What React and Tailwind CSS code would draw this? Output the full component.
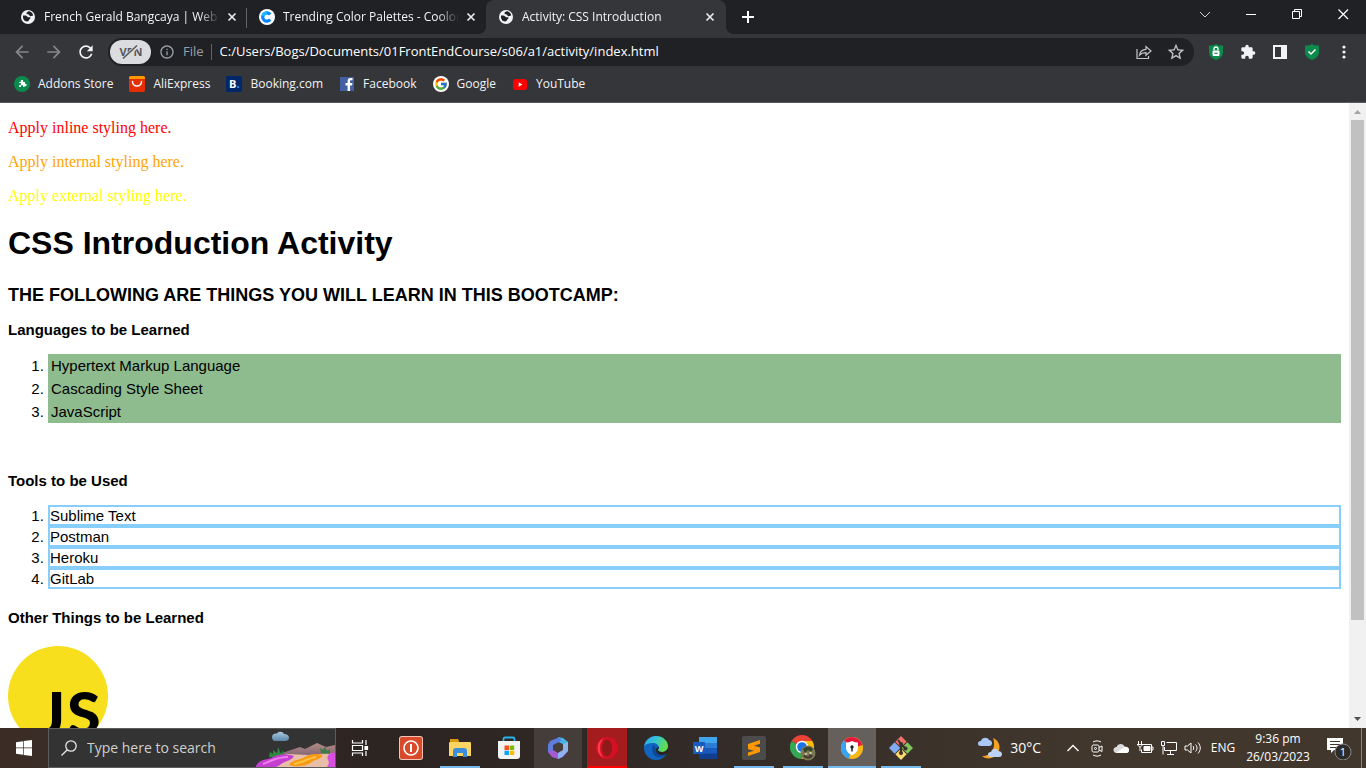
import React from "react";
import { FcGoogle } from "react-icons/fc";
import { MdExtension, MdStarBorder, MdOutlineInfo, MdRefresh, MdArrowBack, MdArrowForward } from "react-icons/md";

const globePath =
  "M12 2C6.480 2 2 6.480 2 12s4.480 10 10 10 10-4.480 10-10S17.520 2 12 2zM4 12c0-.6.1-1.200.200-1.800L8.500 14.500c.8.700 1.500.500 2.500.500v1c0 1.100.500 1.500 1 2v1.900C7.500 19.900 4 16.400 4 12zm14 5.400c-.3-.8-1-1.400-1.900-1.400h-1v-3c0-.6-.400-1-1-1H9v-2h1.500c.6 0 1-.4 1-1V7h2c1.100 0 2-.9 2-2v-.300c2.700 1.100 4.500 4 4.500 7.300 0 2-.8 4-2 5.400z";

function Globe() {
  return (
    <svg className="size-4 shrink-0" viewBox="0 0 16 16" aria-hidden="true">
      <circle cx="8" cy="8" r="7" fill="#f1f3f4" />
      <path d="M3 6.500h2.500c1.300 0 1.500 1.500 2.700 1.700 1 .2 2.300-.200 2.300.9 0 1-1.300 1-1.500 2-.1.700-.8 1.300-1.900 1.300-2.900 0-4.500-2.500-4.100-5.900z" fill="#202124" />
      <path d="M8.500 2.300c-.8.900-2.200.800-2 2.100.2 1.200 2.200.500 2.700 1.500.4.900 1 1.500 2.200 1.200l1.800-.6C12.800 4 10.800 2.300 8.500 2.300z" fill="#202124" />
    </svg>
  );
}

function CoolorsIcon() {
  return (
    <svg className="size-4 shrink-0" viewBox="0 0 16 16" aria-hidden="true">
      <circle cx="8" cy="8" r="8" fill="#fff" />
      <path d="M11.200 10.600A4.200 4.200 0 1 1 11.200 5.400" fill="none" stroke="#0a84ff" strokeWidth="3.200" />
      <path d="M4 7A4.200 4.200 0 0 1 8 3.800" fill="none" stroke="#1fb6ff" strokeWidth="3.200" />
    </svg>
  );
}

function Cross() {
  return (
    <svg className="size-4" viewBox="0 0 16 16" aria-hidden="true">
      <path d="M4.500 4.500l7 7M11.500 4.500l-7 7" stroke="#e8eaed" strokeWidth="1.700" />
    </svg>
  );
}

function Tab({ icon, title, active, separator }) {
  return (
    <div
      role="tab"
      aria-selected={!!active}
      className={
        active
          ? "relative flex h-[34px] w-[240px] items-center gap-2 rounded-t-lg bg-[#35363a] pl-3 pr-2"
          : "relative flex h-[34px] w-[239px] items-center gap-2 pl-3 pr-[7px]"
      }
    >
      {active && (
        <>
          <span className="absolute -left-2 bottom-0 size-2 bg-[radial-gradient(circle_at_top_left,#202124_8px,#35363a_8px)]" />
          <span className="absolute -right-2 bottom-0 size-2 bg-[radial-gradient(circle_at_top_right,#202124_8px,#35363a_8px)]" />
        </>
      )}
      {icon}
      <span className="min-w-0 flex-1 overflow-hidden whitespace-nowrap [mask-image:linear-gradient(to_right,black_88%,transparent)]">
        {title}
      </span>
      <button aria-label={"Close " + title} className="-ml-1">
        <Cross />
      </button>
      {separator && <span className="absolute right-0 top-2 h-5 w-px bg-[#5f6368]" />}
    </div>
  );
}

function WindowButton({ label, children }) {
  return (
    <button aria-label={label} className="flex h-7 w-[46px] items-center justify-center">
      <svg className="size-3" viewBox="0 0 12 12" fill="none" stroke="#fff" aria-hidden="true">
        {children}
      </svg>
    </button>
  );
}

function TabStrip() {
  return (
    <header className="flex h-[34px] shrink-0 justify-between bg-[#202124] pl-2">
      <div role="tablist" className="flex">
        <Tab icon={<Globe />} title="French Gerald Bangcaya | Web Developer" separator />
        <Tab icon={<CoolorsIcon />} title="Trending Color Palettes - Coolors" />
        <Tab icon={<Globe />} title="Activity: CSS Introduction" active />
        <button aria-label="New tab" className="ml-3 flex w-5 items-center justify-center">
          <svg className="size-3" viewBox="0 0 12 12" aria-hidden="true">
            <path d="M6 0v12M0 6h12" stroke="#fff" strokeWidth="2" />
          </svg>
        </button>
      </div>
      <div className="flex">
        <WindowButton label="Search tabs">
          <path d="M1 4l5 5 5-5" stroke="#d0d1d3" />
        </WindowButton>
        <WindowButton label="Minimize">
          <path d="M1 6.500h10" />
        </WindowButton>
        <WindowButton label="Restore">
          <path d="M1.500 3.500h7v7h-7zM3.500 3.500v-2h7v7h-2" />
        </WindowButton>
        <WindowButton label="Close">
          <path d="M1.500 1.500l9.500 9.500M11 1.500l-9.500 9.500" strokeWidth="1.200" />
        </WindowButton>
      </div>
    </header>
  );
}

function Shield({ children }) {
  return (
    <svg className="size-4" viewBox="0 0 16 16" aria-hidden="true">
      <path d="M8 0c2 1.200 4.500 1.700 7 1.500V8.500c0 3.500-3 6-7 7.500-4-1.500-7-4-7-7.500V1.500C3.500 1.700 6 1.200 8 0z" fill="#0b8a4b" />
      {children}
    </svg>
  );
}

function Toolbar() {
  return (
    <div className="flex h-9 shrink-0 items-center bg-[#35363a] pl-3 pr-3 pt-0">
      <div className="flex gap-3">
        <button aria-label="Back" className="size-5 text-[#85878b]"><MdArrowBack className="size-5" /></button>
        <button aria-label="Forward" className="size-5 text-[#85878b]"><MdArrowForward className="size-5" /></button>
        <button aria-label="Reload" className="size-5 text-[#f1f3f4]"><MdRefresh className="size-5" /></button>
      </div>
      <div className="ml-3 flex h-7 min-w-0 flex-1 items-center rounded-full bg-[#202124] pl-[2px] pr-2">
        <button aria-label="VPN off" className="flex h-6 w-[41px] items-center justify-center rounded-full bg-[#dadce0]">
          <svg className="h-4 w-7" viewBox="0 0 28 16" aria-hidden="true">
            <text x="14" y="12" textAnchor="middle" fontSize="11" fontWeight="700" fontFamily="Open Sans" fill="#55585c">VPN</text>
            <path d="M7 15L21 1" stroke="#dadce0" strokeWidth="4" />
            <path d="M6 14.500L20 1.500" stroke="#55585c" strokeWidth="1.600" />
          </svg>
        </button>
        <MdOutlineInfo className="ml-2 size-4 shrink-0 text-[#9aa0a6]" />
        <span className="ml-2 text-[13px] text-[#9aa0a6]">File</span>
        <span className="ml-[7px] h-4 w-px bg-[#5f6368]" />
        <input
          aria-label="Address"
          className="ml-2 min-w-0 flex-1 bg-transparent text-[13px] text-white outline-none"
          defaultValue="C:/Users/Bogs/Documents/01FrontEndCourse/s06/a1/activity/index.html"
        />
        <button aria-label="Share" className="mr-3 size-5">
          <svg className="size-5" viewBox="0 0 20 20" fill="none" stroke="#c3c5c8" strokeWidth="1.200" aria-hidden="true">
            <path d="M3 7v9.500h11.500V14" />
            <path d="M5.500 13c.5-3.500 3-5.500 6.500-5.700V4.500l5 4.500-5 4.300v-2.700c-3-.1-5 .7-6.500 2.400z" />
          </svg>
        </button>
        <button aria-label="Bookmark this page" className="text-[#c3c5c8]"><MdStarBorder className="size-5" /></button>
      </div>
      <div className="ml-[14px] flex items-center gap-4 pr-[2px]">
        <button aria-label="VPN extension">
          <Shield>
            <rect x="4.500" y="6.500" width="7" height="5.500" rx="1" fill="#fff" />
            <path d="M6 6.500V5a2 2 0 0 1 4 0v1.500" fill="none" stroke="#fff" strokeWidth="1.300" />
            <path d="M6.500 9.300h3" stroke="#0b8a4b" strokeWidth="1.200" />
          </Shield>
        </button>
        <button aria-label="Extensions" className="text-[#f1f3f4]"><MdExtension className="size-4" /></button>
        <button aria-label="Side panel">
          <svg className="size-4" viewBox="0 0 16 16" aria-hidden="true">
            <path fillRule="evenodd" d="M1 1h14v14H1zM3 3v10h6V3z" fill="#f1f3f4" />
          </svg>
        </button>
        <button aria-label="Security">
          <Shield>
            <path d="M4.500 7.500l2.500 2.500 4.500-4.500" fill="none" stroke="#fff" strokeWidth="1.500" />
          </Shield>
        </button>
        <button aria-label="Menu">
          <svg className="size-4" viewBox="0 0 16 16" fill="#f1f3f4" aria-hidden="true">
            <circle cx="8" cy="3" r="1.600" /><circle cx="8" cy="8" r="1.600" /><circle cx="8" cy="13" r="1.600" />
          </svg>
        </button>
      </div>
    </div>
  );
}

function BookmarkIcon({ children }) {
  return <svg className="size-4 shrink-0" viewBox="0 0 16 16" aria-hidden="true">{children}</svg>;
}

const bookmarks = [
  {
    name: "Addons Store",
    icon: (
      <BookmarkIcon>
        <circle cx="8" cy="8" r="8" fill="#0b8a4b" />
        <path d="M5 6h2a1.300 1.300 0 1 1 2 0h2v1.700a1.300 1.300 0 1 1-.5 2.300V11H9a1.200 1.200 0 1 0-2 0H5V9a1.200 1.200 0 1 0 0-1.800z" fill="#fff" />
      </BookmarkIcon>
    ),
  },
  {
    name: "AliExpress",
    icon: (
      <BookmarkIcon>
        <rect width="16" height="16" rx="2" fill="#e62e04" />
        <path d="M2 0h12a2 2 0 0 1 2 2v1H0V2a2 2 0 0 1 2-2z" fill="#ff9900" />
        <path d="M3.500 5.500a4.500 4.500 0 0 0 9 0" fill="none" stroke="#fff" strokeWidth="1.500" strokeLinecap="round" />
      </BookmarkIcon>
    ),
  },
  {
    name: "Booking.com",
    icon: (
      <BookmarkIcon>
        <rect width="16" height="16" rx="2" fill="#00266b" />
        <text x="3" y="12" fontSize="11" fontWeight="700" fontFamily="Open Sans" fill="#fff">B</text>
        <circle cx="12" cy="11" r="1.100" fill="#1a9cf0" />
      </BookmarkIcon>
    ),
  },
  {
    name: "Facebook",
    icon: (
      <BookmarkIcon>
        <rect x="1" y="1" width="14" height="14" fill="#4460a0" />
        <path d="M13.500 4.200h-1.300c-1 0-1.200.500-1.200 1.200V7h2.400l-.3 2.400H11V15H8.600V9.400H6.500V7h2.100V5.200C8.600 3 9.900 2 11.700 2l1.800.1z" fill="#fff" />
      </BookmarkIcon>
    ),
  },
  {
    name: "Google",
    icon: (
      <span className="flex size-4 shrink-0 items-center justify-center rounded-full bg-white">
        <FcGoogle className="size-[14px]" />
      </span>
    ),
  },
  {
    name: "YouTube",
    icon: (
      <BookmarkIcon>
        <rect x="1" y="3" width="14" height="11" rx="2.500" fill="#f00" />
        <path d="M6.700 6.300v4.400L10.300 8.500z" fill="#fff" />
      </BookmarkIcon>
    ),
  },
];

function BookmarksBar() {
  return (
    <nav className="flex h-8 shrink-0 items-center gap-4 bg-[#35363a] pb-1 pl-[14px]">
      {bookmarks.map((b) => (
        <a key={b.name} href="#" className="flex items-center gap-2">
          {b.icon}
          {b.name}
        </a>
      ))}
    </nav>
  );
}

function Page() {
  return (
    <main className="min-w-0 flex-1 overflow-hidden px-2 pt-4 font-['Liberation_Sans',Arial,sans-serif] text-[15px] leading-[17px]">
      <div className="flex flex-col gap-4 font-['Liberation_Serif',serif] text-base leading-[18px]">
        <p className="text-[red]">Apply inline styling here.</p>
        <p className="text-[orange]">Apply internal styling here.</p>
        <p className="text-[yellow]">Apply external styling here.</p>
      </div>
      <h1 className="mt-5 text-[32px] font-bold leading-9">CSS Introduction Activity</h1>
      <h3 className="mt-6 text-lg font-bold uppercase leading-5">The following are things you will learn in this bootcamp:</h3>
      <h4 className="mt-4 font-bold">Languages to be Learned</h4>
      <ol className="mt-4 list-decimal pl-10">
        {["Hypertext Markup Language", "Cascading Style Sheet", "JavaScript"].map((item) => (
          <li key={item} className="bg-[#8fbc8f] p-[3px]">{item}</li>
        ))}
      </ol>
      <h4 className="mt-[49px] font-bold">Tools to be Used</h4>
      <ol className="mt-4 list-decimal pl-10">
        {["Sublime Text", "Postman", "Heroku", "GitLab"].map((item) => (
          <li key={item} className="border-2 border-[#87cefa]">{item}</li>
        ))}
      </ol>
      <h4 className="mt-5 font-bold">Other Things to be Learned</h4>
      <svg className="mt-5 size-[100px]" viewBox="0 0 100 100" role="img" aria-label="JavaScript">
        <defs>
          <clipPath id="disc"><circle cx="50" cy="50" r="50" /></clipPath>
        </defs>
        <g clipPath="url(#disc)">
          <rect width="100" height="100" fill="#f7df1e" />
          <text x="31" y="90" fontSize="61" fontWeight="900" fontFamily="Lato">J</text>
          <text x="59" y="90" fontSize="61" fontWeight="900" fontFamily="Lato">S</text>
        </g>
      </svg>
    </main>
  );
}

function ScrollBar() {
  return (
    <div className="flex w-[17px] shrink-0 flex-col items-center bg-[#f1f1f1]" aria-hidden="true">
      <svg className="size-[17px] shrink-0" viewBox="0 0 17 17"><path d="M5 11h7L8.500 7z" fill="#a3a3a3" /></svg>
      <div className="w-[13px] basis-4/5 bg-[#c1c1c1]" />
      <div className="flex-1" />
      <svg className="size-[17px] shrink-0" viewBox="0 0 17 17"><path d="M5 6h7l-3.500 4z" fill="#505050" /></svg>
    </div>
  );
}

function SearchArt() {
  return (
    <svg className="h-[38px] w-20 shrink-0" viewBox="0 0 80 38" aria-hidden="true">
      <defs>
        <linearGradient id="hill" x1="0" y1="0" x2="0" y2="1">
          <stop offset="0" stopColor="#b58a80" /><stop offset="1" stopColor="#6d5876" />
        </linearGradient>
        <linearGradient id="cloud" x1="0" y1="0" x2="0" y2="1">
          <stop offset="0" stopColor="#a9cbe0" /><stop offset="1" stopColor="#5b87a8" />
        </linearGradient>
      </defs>
      <path d="M17 8c0-3 3-4 5-3.500C23 2 28 2 29 5c3 0 5 1.500 5 4 0 2-2 3-4 3H20c-2 0-3-2-3-4z" fill="url(#cloud)" />
      <path d="M24 25L45 18l5 2 12-6 9 4 9-2v16H24z" fill="url(#hill)" />
      <path d="M2 38c8-5 17-11 31-13l20 1 27-2v14z" fill="#e6bfa6" />
      <path d="M14 28l1-5 3 2 0-4 4 3 1-6 3 7 2-4 1 8z" fill="#2c8a3c" />
      <path d="M66 24l-1-5 3 2 2-3 2 4 3-2v5z" fill="#3c7d45" />
      <path d="M1 37c4-8 11-5 17-9 7-4 14-3 21-1-3 5-9 5-13 8-4 4-8 3-12 3H1z" fill="#c43fd0" />
      <path d="M8 35c7-2 12-7 25-7" stroke="#ef7df0" strokeWidth="2" fill="none" />
      <path d="M34 36c3-5 9-5 14-7 6-4 13-5 20-3-3 5-7 4-11 7-7 5-17 5-23 3z" fill="#f59a12" />
      <path d="M39 35c8-1 14-6 22-7" stroke="#ffc145" strokeWidth="2" fill="none" />
      <path d="M80 24c-5-1-9 3-7 7 2 3 0 5-1 7h8z" fill="#d84fe0" />
    </svg>
  );
}

function AppIcon({ children }) {
  return <svg className="size-6" viewBox="0 0 24 24" aria-hidden="true">{children}</svg>;
}

const apps = [
  {
    name: "Power",
    icon: (
      <AppIcon>
        <rect width="24" height="24" rx="3" fill="#f3c3b5" />
        <rect x="1" y="1" width="22" height="22" rx="2" fill="#d94a2b" />
        <circle cx="12" cy="12" r="7" fill="none" stroke="#fff" strokeWidth="1.600" />
        <path d="M12 8v8" stroke="#fff" strokeWidth="2" />
      </AppIcon>
    ),
  },
  {
    name: "File Explorer",
    running: true,
    icon: (
      <AppIcon>
        <path d="M2 3h8l1 2v4H2z" fill="#d99a10" />
        <path d="M2 6h20a1 1 0 0 1 1 1v13H1V7a1 1 0 0 1 1-1z" fill="#fcd462" />
        <path d="M5 21v-6a3 3 0 0 1 3-3h8a3 3 0 0 1 3 3v6h-4v-4H9v4z" fill="#3a8edb" />
      </AppIcon>
    ),
  },
  {
    name: "Microsoft Store",
    icon: (
      <AppIcon>
        <path d="M6.500 6V3a1.500 1.500 0 0 1 1.500-1.500h8A1.500 1.500 0 0 1 17.500 3v3" fill="none" stroke="#2bb4ea" strokeWidth="1.800" />
        <path d="M1 5h22v15a3 3 0 0 1-3 3H4a3 3 0 0 1-3-3z" fill="#f3f3f3" />
        <path d="M7.500 9.500H12v4.500H7.500z" fill="#f25022" /><path d="M12.700 9.500h4.500v4.500h-4.500z" fill="#7fba00" />
        <path d="M7.500 14.700H12v4.300H7.500z" fill="#00a4ef" /><path d="M12.700 14.700h4.500v4.300h-4.500z" fill="#ffb900" />
      </AppIcon>
    ),
  },
  {
    name: "Microsoft 365",
    tile: "bg-[#453d3a]",
    icon: (
      <AppIcon>
        <path d="M12 1l5 1 5 4v9l-5-3V8l-5-2z" fill="#45b5e8" />
        <path d="M14 1L4 5 2 9v7l5 3V9l8-4z" fill="#5d7de0" />
        <path d="M2 16l5-2 5 3 6-3 4 1-5 6-5 2-6-2z" fill="#a25bd0" />
        <path d="M22 6v9l-6 6-4 2V17l5-3V8z" fill="#8eb4f0" />
      </AppIcon>
    ),
  },
  {
    name: "Opera",
    opera: true,
    icon: (
      <AppIcon>
        <ellipse cx="12" cy="12" rx="11" ry="11" fill="#d41024" />
        <path d="M9 2a11 11 0 0 0 0 20C6 19 5 16 5 12s1-7 4-10z" fill="#ff3b4d" />
        <ellipse cx="12" cy="12" rx="5" ry="8.500" fill="#8e1a1c" />
      </AppIcon>
    ),
  },
  {
    name: "Microsoft Edge",
    icon: (
      <AppIcon>
        <defs>
          <linearGradient id="edgeTop" x1="0" y1="0" x2="1" y2="0.400">
            <stop offset="0" stopColor="#2b9fe6" /><stop offset="0.500" stopColor="#36c5d6" /><stop offset="1" stopColor="#60dc4d" />
          </linearGradient>
        </defs>
        <circle cx="12" cy="12" r="12" fill="#0f65c0" />
        <path d="M0 11C1 4 6 0 12 0c7 0 12 5 12 10 0 4-3 6-6 6-2 0-4-1-4-2 0-.6 1-1 1-2.500C15 9 12 7 9 7 5 7 1 8 0 11z" fill="url(#edgeTop)" />
        <path d="M10 9c-3 1-3 9 3 12 3 1 6 0 9-2l2-6-4 4c-5 2-8 0-8-3 0-2-1-4-2-5z" fill="#0c4a9c" />
        <path d="M15 11c0 1-1 2-1 3s2 2 4 2c3 0 5-2 6-4v5l-2 1c-4 2-10 1-10-4 0-1 .5-3 3-3z" fill="#2c2422" />
      </AppIcon>
    ),
  },
  {
    name: "Word",
    icon: (
      <AppIcon>
        <rect x="6" y="1" width="18" height="22" rx="1" fill="#2b7cd3" />
        <path d="M6 1h18v6H6z" fill="#41a5ee" /><path d="M6 12h18v6H6z" fill="#185abd" /><path d="M6 17.500h18V23H6z" fill="#103f91" />
        <rect x="0" y="6" width="12" height="12" rx="1" fill="#185abd" />
        <text x="6" y="15.500" textAnchor="middle" fontSize="9" fontWeight="700" fontFamily="Open Sans" fill="#fff">W</text>
      </AppIcon>
    ),
  },
  {
    name: "Sublime Text",
    running: true,
    icon: (
      <AppIcon>
        <rect width="24" height="24" rx="2" fill="#4b4b4b" />
        <path d="M18 4L6 8v5l6 1.700L6 16.500V20l12-4v-4.500l-6-1.700 6-2z" fill="#ff9800" />
      </AppIcon>
    ),
  },
  {
    name: "Google Chrome",
    running: true,
    icon: (
      <svg className="size-[26px]" viewBox="0 0 26 26" aria-hidden="true">
        <path d="M12 12L1.600 6a12 12 0 0 1 20.800 0z" fill="#ea4335" />
        <path d="M12 12L1.600 6A12 12 0 0 0 12 24z" fill="#34a853" />
        <path d="M12 12L12 24A12 12 0 0 0 22.400 6H12z" fill="#fbbc04" />
        <circle cx="12" cy="12" r="6.200" fill="#fff" /><circle cx="12" cy="12" r="4.800" fill="#1a73e8" />
        <circle cx="18" cy="18" r="7.500" fill="#7b7a55" />
        <path d="M13 14c3-3 7-3 10 0l-2 3-3-2-3 3z" fill="#36452c" /><path d="M13 21l3-2 2 3 2-4 3 3c-2 3-7 4-10 0z" fill="#4a3d32" />
        <circle cx="16" cy="19" r="1.300" fill="#d9b49a" /><circle cx="20.500" cy="18" r="1.200" fill="#c9d6a4" />
      </svg>
    ),
  },
  {
    name: "Secure Browser",
    running: true,
    tile: "bg-[#66605c]",
    icon: (
      <AppIcon>
        <circle cx="12" cy="12" r="11" fill="#f7b718" />
        <path d="M12 12L4 4.500A11 11 0 0 1 22.500 9z" fill="#e5173f" />
        <path d="M12 12L4 4.500A11 11 0 0 0 9 22.500z" fill="#36a3f7" />
        <path d="M12 5c2 1 4 1.500 6 1.500V12c0 3-3 6-6 7.500-3-1.500-6-4.500-6-7.500V6.500C8 6.500 10 6 12 5z" fill="#fff" />
        <circle cx="12" cy="11" r="1.700" fill="#222" /><path d="M12 11v4.500" stroke="#222" strokeWidth="1.500" />
      </AppIcon>
    ),
  },
  {
    name: "Git Bash",
    running: true,
    icon: (
      <AppIcon>
        <g transform="rotate(45 12 12)">
          <rect x="3.500" y="3.500" width="8" height="8" fill="#f0706c" /><rect x="12.500" y="3.500" width="8" height="8" fill="#80c45c" />
          <rect x="3.500" y="12.500" width="8" height="8" fill="#82acf2" /><rect x="12.500" y="12.500" width="8" height="8" fill="#fbd96b" />
        </g>
        <path d="M9 4l3 4v9M12 8l5 5" stroke="#3a2f2a" strokeWidth="2" fill="none" />
        <circle cx="12" cy="8" r="2" fill="#3a2f2a" /><circle cx="12" cy="17" r="2" fill="#3a2f2a" /><circle cx="16.500" cy="12.500" r="2" fill="#3a2f2a" />
      </AppIcon>
    ),
  },
];

function AppButton({ app }) {
  return (
    <button aria-label={app.name} className={"relative flex h-10 w-12 items-center justify-center " + (app.tile || "")}>
      {app.opera && <span className="absolute inset-x-1 inset-y-0 border-b-2 border-[red] bg-[#a51c1e]" />}
      <span className="relative">{app.icon}</span>
      {app.running && (
        <span className={app.tile ? "absolute inset-x-0 bottom-0 h-[2px] bg-[#76b9ed]" : "absolute inset-x-1 bottom-0 h-[2px] bg-[#76b9ed]"} />
      )}
    </button>
  );
}

function TrayIcon({ label, children }) {
  return (
    <button aria-label={label} className="flex h-10 w-6 items-center justify-center">
      <svg className="size-[18px]" viewBox="0 0 18 18" fill="none" stroke="#fff" aria-hidden="true">{children}</svg>
    </button>
  );
}

function Tray() {
  return (
    <div className="ml-auto flex items-center text-xs text-white">
      <button className="flex items-center gap-2 text-sm">
        <svg className="h-6 w-[25px]" viewBox="0 0 25 24" aria-hidden="true">
          <path d="M16 2c8 3 9 14 1 19-4 2-9 2-12-1 5 0 8-2 10-5s3-8 1-13z" fill="#f7a223" />
          <path d="M1 8c0-3 2-3 3-3 1-4 7-4 8-1 2 0 3 2 3 3 0 2-1 3-3 3H4C2 10 1 9 1 8z" fill="#a9c8f5" />
          <path d="M11 19c0-3 2-3 3-3 1-4 7-4 7-1 2 0 4 1 4 3s-1 3-3 3h-8c-2 0-3-1-3-2z" fill="#bcd3f7" />
        </svg>
        30°C
      </button>
      <button aria-label="Show hidden icons" className="ml-5 flex h-10 w-6 items-center justify-center">
        <svg className="h-2 w-3" viewBox="0 0 12 8" fill="none" stroke="#fff" strokeWidth="1.300" aria-hidden="true"><path d="M.5 7L6 1.500 11.500 7" /></svg>
      </button>
      <TrayIcon label="Meet Now">
        <rect x="4" y="6" width="7" height="7" rx="1.500" /><path d="M11 8.500l3-1.500v5.500l-3-1.500M5 3c3-1.500 5-1.500 8 0M5 16c3 1.500 5 1.500 8 0" /><circle cx="7.500" cy="9.500" r="1" />
      </TrayIcon>
      <TrayIcon label="OneDrive">
        <path d="M1.500 11c0-2.500 2-3.200 3.200-3C5.500 4.500 11 3.500 12.500 7.500c3 0 4.500 1.500 4.500 3.500 0 1.800-1.200 3-3 3H4.500c-2 0-3-1.500-3-3z" fill="#dcdcdc" stroke="none" />
        <path d="M4 14L12.500 8c3 0 4.500 1 4.500 3s-1.200 3-3 3z" fill="#fff" stroke="none" />
      </TrayIcon>
      <TrayIcon label="Battery">
        <path d="M5.500 5.500h10v8h-10v-3M15.500 8h1.500v3h-1.500M2.500 2v3M5.500 2v3M1 5.500h6M2 5.500c0 3 4 3 4 0M4 8v4" /><path d="M8 7.500h6v4H8z" fill="#fff" />
      </TrayIcon>
      <TrayIcon label="Network">
        <path d="M6.500 3.500h10v8H4.500V8M10.500 11.500v4M7 15.500h7M1.500 2.500h3v4h-3zM3 6.500v9" />
      </TrayIcon>
      <TrayIcon label="Volume">
        <path d="M1 7v4h2.500L7 14V4L3.500 7zM9 7c1 1.200 1 2.800 0 4M11.500 5.500c2 2 2 5 0 7M14 3.500c3 3.500 3 7.500 0 11" />
      </TrayIcon>
      <button className="flex h-10 w-9 items-center justify-center">ENG</button>
      <button className="flex h-10 w-[74px] flex-col items-center justify-center leading-[18px]">
        <span>9:36 pm</span>
        <span>26/03/2023</span>
      </button>
      <button aria-label="Notifications" className="flex h-10 w-[46px] items-center justify-center">
        <svg className="h-6 w-7" viewBox="0 0 28 24" aria-hidden="true">
          <path d="M3 2h16v12H10l-3 3v-3H3z" fill="#fff" />
          <path d="M6 5.500h10M6 8.500h10M6 11.500h7" stroke="#40362d" />
          <circle cx="19" cy="16" r="8" fill="#2b2b2b" stroke="#8b8580" />
          <text x="19" y="20" textAnchor="middle" fontSize="11" fontFamily="Open Sans" fill="#fff">1</text>
        </svg>
      </button>
      <button aria-label="Show desktop" className="h-10 w-[5px] border-l border-[#8b8580]" />
    </div>
  );
}

function Taskbar() {
  return (
    <footer className="flex h-10 shrink-0 bg-[linear-gradient(90deg,#3b2d26,#2c2422_30%,#342c27_55%,#41372d_80%,#41372d)]">
      <button aria-label="Start" className="flex w-12 items-center justify-center">
        <svg className="size-4" viewBox="0 0 16 16" fill="#fff" aria-hidden="true">
          <path d="M0 2.200L7 1.200V7.600H0zM7.700 1.100L16 0V7.600H7.700zM0 8.300H7V14.800L0 13.800zM7.700 8.300H16V16L7.700 14.900z" />
        </svg>
      </button>
      <div className="flex w-72 items-center border border-[#5e5c5b] bg-[#333] pl-3">
        <svg className="size-4 shrink-0" viewBox="0 0 16 16" fill="none" stroke="#e8e8e8" strokeWidth="1.300" aria-hidden="true">
          <circle cx="10" cy="6" r="5.200" /><path d="M6.300 9.700L.5 15.500" />
        </svg>
        <input aria-label="Search" placeholder="Type here to search" className="ml-[10px] min-w-0 flex-1 bg-transparent text-sm outline-none placeholder:text-[#cfcfcf]" />
        <SearchArt />
      </div>
      <button aria-label="Task View" className="flex w-[50px] items-center pl-[14px]">
        <svg className="size-5" viewBox="0 0 20 20" fill="none" stroke="#fff" strokeWidth="1.200" aria-hidden="true">
          <path d="M2.500 2v3h10V2M2.500 18v-3h10v3M2.500 7.500h10v5h-10zM16 2v5M16 13v5" /><path d="M15 8.500h2.500v3H15z" fill="#fff" />
        </svg>
      </button>
      <div className="flex gap-px pl-px">
        {apps.map((app) => <AppButton key={app.name} app={app} />)}
      </div>
      <Tray />
    </footer>
  );
}

export default function App() {
  return (
    <div className="flex h-screen flex-col overflow-hidden bg-white font-['Open_Sans','Segoe_UI',sans-serif] text-black">
      <div className="shrink-0 text-xs text-[#f1f3f4]">
        <TabStrip />
        <Toolbar />
        <BookmarksBar />
        <div className="h-px bg-[#5a5b5f]" />
      </div>
      <div className="flex min-h-0 flex-1">
        <Page />
        <ScrollBar />
      </div>
      <Taskbar />
    </div>
  );
}
